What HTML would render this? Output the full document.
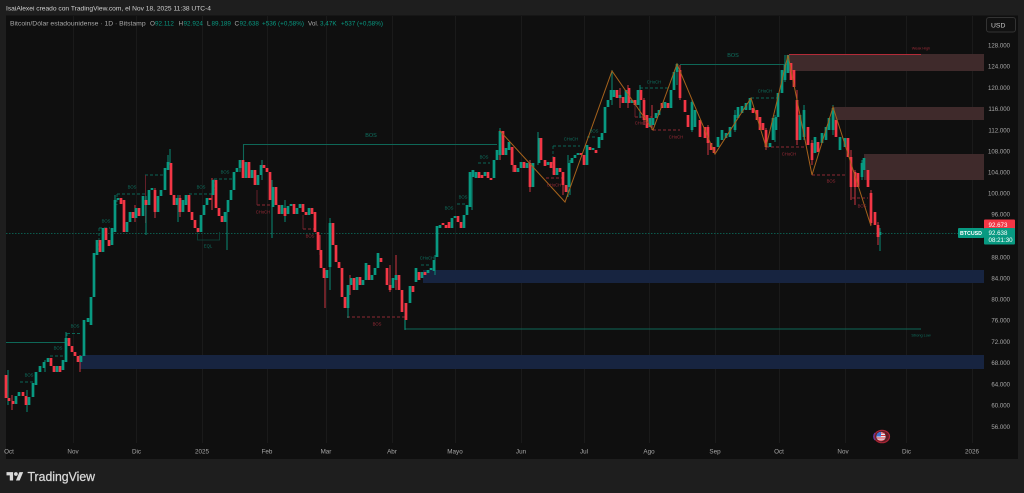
<!DOCTYPE html>
<html><head><meta charset="utf-8"><title>BTCUSD</title>
<style>
html,body{margin:0;padding:0;background:#1e1e1e;width:1024px;height:493px;overflow:hidden}
svg{display:block;font-family:"Liberation Sans",sans-serif;filter:blur(.35px)}
.ax{font-size:6.300px;fill:#a8a8a8}
.p{font-size:6.100px;fill:#a8a8a8}
.g{font-size:4.200px;fill:#0f7261}
.r{font-size:4.200px;fill:#9a2b37}
</style></head><body>
<svg width="1024" height="493" viewBox="0 0 1024 493" xmlns="http://www.w3.org/2000/svg">
<rect width="1024" height="493" fill="#1e1e1e"/>
<rect x="6" y="15.500" width="1012" height="443.500" fill="#0f0f0f"/>
<path d="M73.500 16V443M136.500 16V443M202.500 16V443M267.500 16V443M326.500 16V443M392.500 16V443M455.500 16V443M521.500 16V443M584.500 16V443M649.500 16V443M715.500 16V443M779.500 16V443M845.500 16V443M906.500 16V443M972.500 16V443" stroke="#1a1a1a" stroke-width="1"/>

<!-- zones -->
<rect x="789" y="54" width="195" height="17" fill="#3f2a2b"/>
<rect x="833" y="107" width="151" height="13" fill="#3f2a2b"/>
<rect x="864" y="154" width="120" height="26" fill="#3f2a2b"/>
<rect x="423" y="270" width="561" height="13" fill="#172440"/>
<rect x="80" y="355" width="904" height="14" fill="#172440"/>

<!-- last price -->
<path d="M6 233.500H958" stroke="#0b5a4c" stroke-width="1" stroke-dasharray="1.500 1.500"/>

<!-- solid structure lines -->
<path d="M6 342.500H67M243.500 170V144.500H497M680 64.500H788M405 318V329H921" fill="none" stroke="#0e6757" stroke-width="1.100"/>
<path d="M789 54.500H921" fill="none" stroke="#b32b38" stroke-width="1"/>
<path d="M197.500 228V240H219.500V232" fill="none" stroke="#0b4a3f" stroke-width=".8"/>

<!-- dashed green -->
<path d="M20 382H33M50 356H66M67 333.500H82M99 228H110M117 194H145M145 175H165M189 194H212M214 179H235M421 265H431M478 163H490M457 204H467M553 146H580M587 137H597M640 88H670M751 98H778M99 228V250M117 194V205M67 333V345M553 146V175M214 179V190" fill="none" stroke="#0b6557" stroke-width=".9" stroke-dasharray="3 2"/>
<!-- dashed red -->
<path d="M257 205H272M303 229H315M347 317H405M546 178H563M635 117H652M653 130H680M766 147H806M812 175H846M852 198H868" fill="none" stroke="#8c2833" stroke-width=".9" stroke-dasharray="3 2"/>
<path d="M145.500 175V223M257 190V205M303 215V229M635 105V117" fill="none" stroke="#6e222c" stroke-width=".9"/>

<!-- wicks -->
<path d="M170 149V165M168 155V170M146 196V235M227 212V250M272 180V238M330 218V290M348 285V318M178 195V222M8 370V405M27 390V412M45 360V372M66 332V342M115 195V210M240 160V172M262 160V180M285 200V222M405 303V330M435 255V275M472 170V210M500 128V160M538 132V165M570 160V195M612 70V105M640 85V118M677 63V85M692 100V132M735 110V132M775 115V142M785 55V82M804 105V140M833 105V135M862 160V180M880 228V251M568 155V197" stroke="#089981" stroke-width=".9" fill="none"/>
<path d="M325 270V308M180 195V217M12 395V410M80 355V372M135 205V222M212 178V210M155 188V218M320 235V255M390 265V292M396 255V290M500 130V160M513 147V172M530 160V192M563 172V195M628 85V108M644 98V125M652 105V130M680 65V100M708 125V155M766 128V150M797 90V145M812 140V165M851 150V200M855 170V205M871 190V225M878 222V245M350 275V295M620 88V108" stroke="#e03a48" stroke-width=".9" fill="none"/>

<!-- green bodies -->
<path stroke="#089981" stroke-width="2.700" fill="none" d="M16 404V396M19 396V392M29 405V397M33 397V383M36 385V372M40 372V366M44 368V362M48 362V358M57 372V366M63 370V360M66 362V338M81 362V356M84 356V320M88 322V318M91 325V297M94 297V253M97 255V240M103 252V228M112 245V228M115 232V200M118 200V198M127 232V222M130 222V212M136 218V208M143 216V196M149 205V190M152 190V188M158 212V196M161 196V190M165 190V168M168 170V162M177 205V198M183 212V200M186 205V195M201 232V215M204 215V205M207 205V198M213 195V180M225 222V212M228 212V200M231 200V190M234 190V172M237 172V168M240 168V160M246 178V162M252 178V170M258 185V175M261 175V165M273 207V187M282 214V205M288 214V206M291 206V204M297 214V208M300 208V204M309 215V208M327 278V270M330 267V223M348 308V285M351 285V278M357 290V277M363 285V280M366 280V263M372 280V275M375 275V268M378 268V253M393 288V278M396 280V275M410 303V286M416 282V268M422 278V272M428 273V270M431 270V268M434 271V260M437 257V226M440 228V225M452 228V218M455 218V216M464 228V215M467 215V205M470 207V172M473 177V170M476 178V172M485 176V172M494 178V160M497 160V150M500 155V131M506 155V148M509 150V142M518 172V168M521 168V162M527 168V163M533 187V163M539 163V138M548 165V162M557 175V168M569 187V163M572 163V158M575 158V155M578 155V153M587 165V145M593 150V148M599 148V137M602 140V133M605 133V107M608 107V100M611 100V90M614 97V90M620 98V95M626 103V90M632 103V100M638 105V90M650 127V118M653 125V118M656 118V113M659 115V110M665 108V102M671 108V90M674 90V72M677 72V64M692 130V102M695 127V110M718 147V137M722 140V130M726 138V133M730 137V127M735 130V115M738 118V107M742 113V106M746 110V103M750 110V98M770 147V143M773 140V118M776 130V117M778 117V93M782 93V70M785 80V65M788 73V55M800 140V115M804 137V110M815 153V137M822 143V133M826 140V127M829 130V118M833 130V108M840 150V137M845 147V138M862 177V163M864 170V158M880 235V232"/>
<!-- red bodies -->
<path stroke="#f23645" stroke-width="2.700" fill="none" d="M6 375V398M9 398V401M13 401V404M23 392V396M26 396V405M51 358V366M54 366V372M60 366V372M69 338V346M72 346V352M75 352V356M78 356V362M100 240V252M106 228V240M109 240V246M121 198V204M124 200V232M133 212V218M139 208V216M146 200V205M155 190V212M171 163V195M174 195V205M180 198V212M189 195V212M192 212V220M195 220V228M198 228V232M210 198V200M216 180V208M219 208V216M222 216V222M243 160V178M249 162V178M255 170V185M264 165V168M267 168V172M270 172V200M276 187V205M279 205V214M285 208V216M294 204V214M303 204V212M306 212V215M312 208V214M315 212V232M318 232V250M321 250V268M324 268V278M333 223V245M336 245V262M339 262V268M342 268V297M345 297V308M354 278V290M360 277V285M369 265V280M381 258V262M387 268V285M390 285V290M399 275V290M402 290V312M406 303V320M413 286V292M419 272V280M425 272V275M443 223V225M446 225V228M449 222V228M458 216V222M461 222V228M479 172V178M482 178V175M488 172V178M491 178V180M503 131V155M512 147V165M515 165V172M524 162V168M530 163V187M541 138V160M545 160V166M551 162V168M554 157V175M560 168V172M563 172V185M566 185V192M581 153V155M584 155V165M590 147V150M596 150V153M617 90V98M623 97V103M629 88V103M635 100V105M641 90V100M644 100V120M647 115V128M662 103V108M668 103V108M680 70V98M685 100V112M688 115V127M700 120V137M705 127V138M708 127V143M711 143V150M714 147V153M753 108V113M757 110V120M760 117V130M763 123V130M766 130V147M791 63V80M794 70V87M797 100V140M808 127V145M812 143V160M818 142V152M836 120V137M848 138V157M851 157V187M855 172V187M858 173V187M868 170V187M871 193V223M875 212V225M878 225V237"/>

<!-- zigzag -->
<polyline points="500,131 565,202 612,71 653,130 677,64 715,154 751,98 766,147 788,55 812,175 833,107 871,226" fill="none" stroke="#a5621c" stroke-width="1"/>

<!-- small labels -->
<text x="371" y="137" class="g" style="font-size:5.500px" text-anchor="middle">BOS</text>
<text x="733" y="57" class="g" style="font-size:5.500px" text-anchor="middle">BOS</text>
<g text-anchor="middle">
<text class="g" x="29" y="376.500">BOS</text><text class="g" x="58" y="349.500">BOS</text><text class="g" x="75" y="327.500">BOS</text>
<text class="g" x="106" y="222.500">BOS</text><text class="g" x="132" y="188.500">BOS</text><text class="g" x="201" y="188.500">BOS</text><text class="g" x="225" y="173.500">BOS</text>
<text class="g" x="208" y="247.500">EQL</text><text class="g" x="484" y="158.500">BOS</text><text class="g" x="463" y="198.500">BOS</text><text class="g" x="449" y="209.500">BOS</text>
<text class="g" x="427" y="259.500">CHoCH</text><text class="g" x="571" y="140.500">CHoCH</text><text class="g" x="594" y="132.500">BOS</text><text class="g" x="654" y="83.500">CHoCH</text><text class="g" x="765" y="92.500">CHoCH</text>
<text class="g" x="921" y="336.500" style="font-size:3.800px">Strong Low</text>
</g>
<g text-anchor="middle">
<text class="r" x="263" y="213.500">CHoCH</text><text class="r" x="310" y="237.500">BOS</text><text class="r" x="377" y="325.500">BOS</text><text class="r" x="554" y="186.500">CHoCH</text><text class="r" x="642" y="124.500">CHoCH</text><text class="r" x="676" y="138.500">CHoCH</text><text class="r" x="789" y="155.500">CHoCH</text><text class="r" x="831" y="182.500">BOS</text><text class="r" x="862" y="207.500">BOS</text>
<text class="r" x="921" y="49.500" style="font-size:3.800px">Weak High</text>
</g>

<!-- header -->
<text x="6" y="10.500" font-size="6.650" fill="#d0d0d0">IsaiAlexei creado con TradingView.com, el Nov 18, 2025 11:38 UTC-4</text>
<text x="10" y="25.500" font-size="6.800" fill="#a9a9a9">Bitcoin/Dólar estadounidense · 1D · Bitstamp</text>
<g font-size="6.350" fill="#089981">
<text x="150" y="25.500" fill="#a9a9a9">O</text><text x="155" y="25.500">92.112</text>
<text x="178.500" y="25.500" fill="#a9a9a9">H</text><text x="183.500" y="25.500">92.924</text>
<text x="207" y="25.500" fill="#a9a9a9">L</text><text x="211.500" y="25.500">89.189</text>
<text x="234.500" y="25.500" fill="#a9a9a9">C</text><text x="239.500" y="25.500">92.638</text>
<text x="262" y="25.500">+536 (+0,58%)</text>
<text x="308" y="25.500" fill="#a9a9a9">Vol.</text><text x="320" y="25.500">3,47K</text>
<text x="341" y="25.500">+537 (+0,58%)</text>
</g>

<!-- USD button -->
<rect x="986.500" y="17.500" width="29" height="14.500" rx="2.500" fill="#111" stroke="#333"/>
<text x="991" y="27.500" font-size="6.800" fill="#c8c8c8">USD</text>

<!-- price axis -->
<g text-anchor="end">
<text class="p" x="1010" y="47.300">128.000</text><text class="p" x="1010" y="68.300">124.000</text><text class="p" x="1010" y="90">120.000</text><text class="p" x="1010" y="111">116.000</text><text class="p" x="1010" y="132.300">112.000</text><text class="p" x="1010" y="153.300">108.000</text><text class="p" x="1010" y="174.300">104.000</text><text class="p" x="1010" y="195.300">100.000</text><text class="p" x="1010" y="216.300">96.000</text><text class="p" x="1010" y="259.300">88.000</text><text class="p" x="1010" y="280.300">84.000</text><text class="p" x="1010" y="301.300">80.000</text><text class="p" x="1010" y="322.300">76.000</text><text class="p" x="1010" y="344">72.000</text><text class="p" x="1010" y="365">68.000</text><text class="p" x="1010" y="386.300">64.000</text><text class="p" x="1010" y="407.300">60.000</text><text class="p" x="1010" y="429">56.000</text>
</g>

<!-- price tags -->
<rect x="984" y="219.500" width="31" height="10" rx="1" fill="#f23645"/>
<text x="988.500" y="226.800" font-size="6.200" fill="#fff">92.673</text>
<rect x="958" y="228" width="26" height="10" rx="1" fill="#089981"/>
<text x="960" y="235.200" font-size="5" font-weight="bold" fill="#fff" textLength="22" lengthAdjust="spacingAndGlyphs">BTCUSD</text>
<rect x="984" y="228" width="31" height="16.500" rx="1" fill="#089981"/>
<text x="988.500" y="235" font-size="6.200" fill="#fff">92.638</text>
<text x="988.500" y="242" font-size="6.200" fill="#fff">08:21:30</text>

<!-- time axis -->
<g text-anchor="middle">
<text class="ax" x="9" y="453.300">Oct</text><text class="ax" x="73" y="453.300">Nov</text><text class="ax" x="136.500" y="453.300">Dic</text><text class="ax" x="202" y="453.300">2025</text><text class="ax" x="267" y="453.300">Feb</text><text class="ax" x="326" y="453.300">Mar</text><text class="ax" x="392" y="453.300">Abr</text><text class="ax" x="455" y="453.300">Mayo</text><text class="ax" x="521" y="453.300">Jun</text><text class="ax" x="584" y="453.300">Jul</text><text class="ax" x="649" y="453.300">Ago</text><text class="ax" x="715" y="453.300">Sep</text><text class="ax" x="779" y="453.300">Oct</text><text class="ax" x="843" y="453.300">Nov</text><text class="ax" x="906.500" y="453.300">Dic</text><text class="ax" x="972" y="453.300">2026</text>
</g>

<!-- flag event -->
<ellipse cx="882" cy="436.500" rx="7.500" ry="6.200" fill="#5c1a24" stroke="#a82535" stroke-width="1.200"/>
<path d="M875 433a7.500 6.200 0 0 0 0 7" fill="none" stroke="#5a3aa8" stroke-width="1.200"/>
<circle cx="881" cy="436.500" r="4.600" fill="#e8e8ee"/>
<path d="M881 433h3.500M881 435.500h4.600M877 438h8M878 440.200h6" stroke="#d8303f" stroke-width=".9"/>
<path d="M876.400 436.500a4.600 4.600 0 0 1 4.600-4.600v4.600z" fill="#3d6fd0"/>

<!-- logo -->
<g transform="translate(6.500,470.200) scale(.47)" fill="#d9d9d9"><path d="M14 22H7V11H0V4h14v18zM28 22h-8l7.500-18h8L28 22z"/><circle cx="20" cy="8" r="4"/></g>
<text x="27.500" y="481" font-size="12.900" fill="#d9d9d9" stroke="#d9d9d9" stroke-width=".25" textLength="67.500" lengthAdjust="spacingAndGlyphs">TradingView</text>
</svg>
</body></html>
